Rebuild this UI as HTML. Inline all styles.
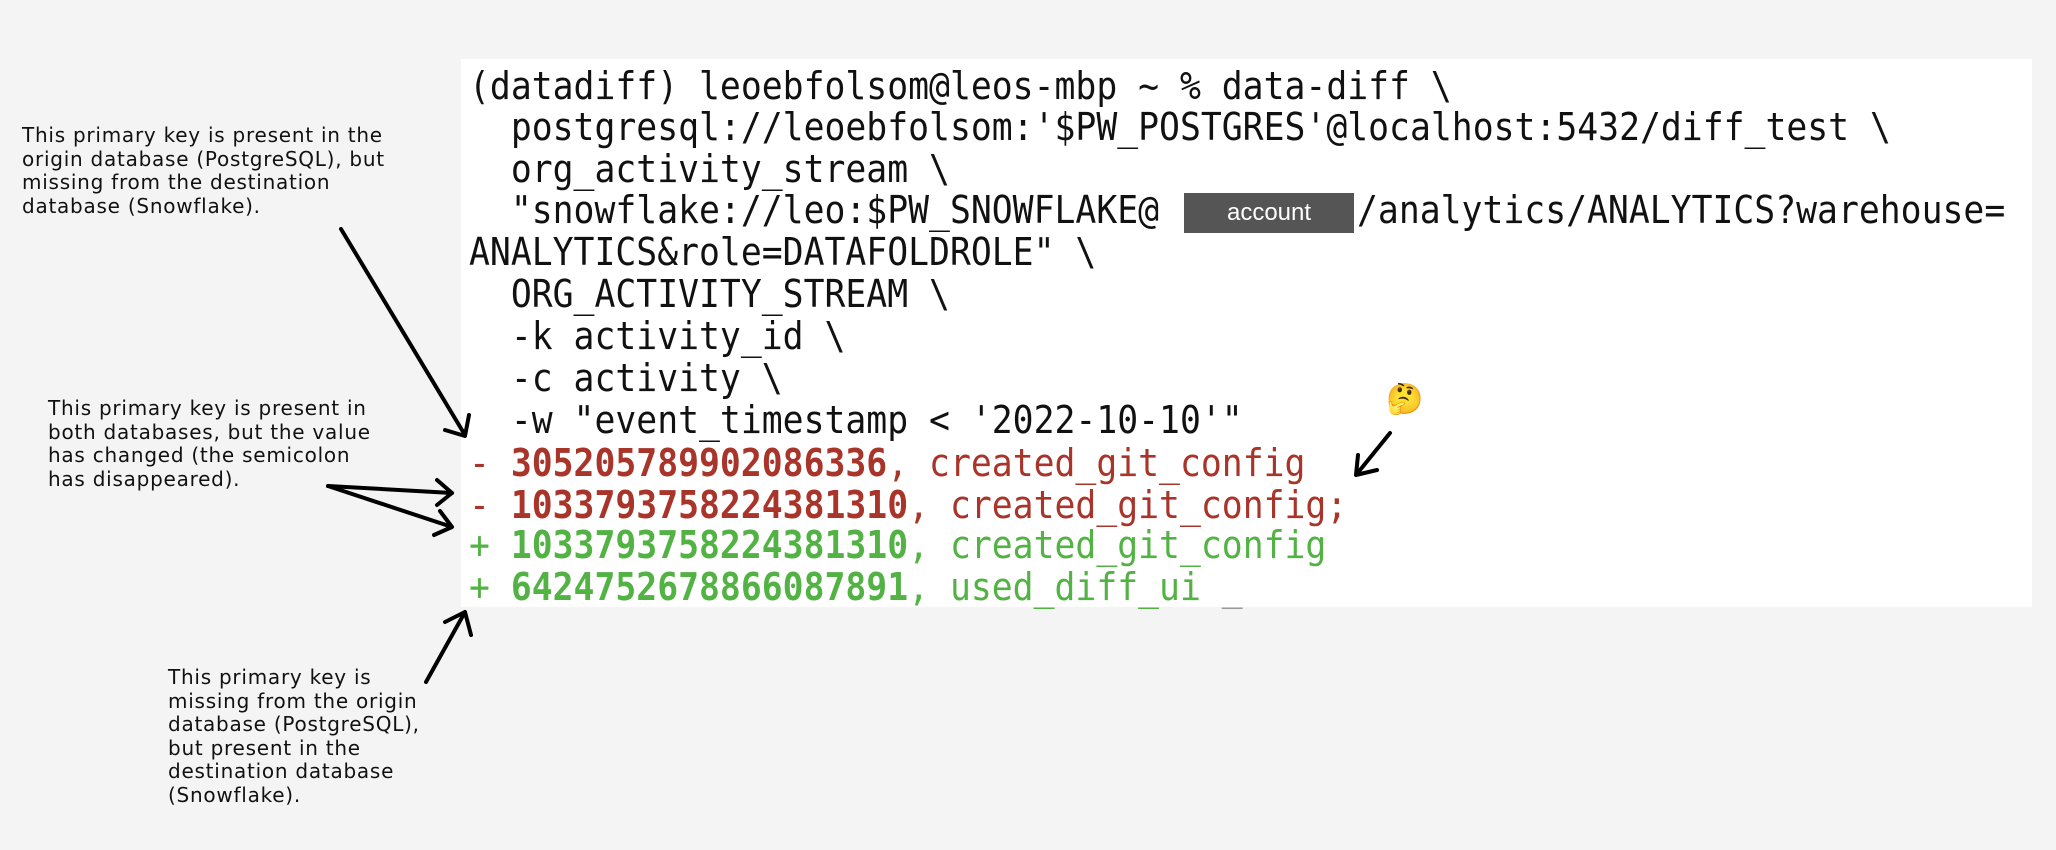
<!DOCTYPE html>
<html><head><meta charset="utf-8"><style>
html,body{margin:0;padding:0;}
body{width:2056px;height:850px;background:#f4f4f4;position:relative;overflow:hidden;}
.term{position:absolute;left:461px;top:59px;width:1571px;height:548px;background:#fff;}
.l{position:absolute;left:469px;font-family:"DejaVu Sans Mono","Liberation Mono",monospace;font-size:38px;line-height:42px;white-space:pre;color:#111;transform:scaleX(0.914);transform-origin:0 0;}
.r{color:#a8342a}.g{color:#53b244}
b{font-weight:bold}
.acc{position:absolute;left:1184px;top:193px;width:170px;height:40px;background:#555;color:#fff;font-family:"Liberation Sans",sans-serif;font-size:24px;line-height:40px;text-align:center;}
.a{position:absolute;font-family:"DejaVu Sans",sans-serif;font-size:20px;line-height:23.6px;color:#111;letter-spacing:0.75px;}
</style></head><body>
<div class="term"></div>
<div class="l" style="top:65px">(datadiff) leoebfolsom@leos-mbp ~ % data-diff \</div>
<div class="l" style="top:106px">  postgresql://leoebfolsom:'$PW_POSTGRES'@localhost:5432/diff_test \</div>
<div class="l" style="top:148px">  org_activity_stream \</div>
<div class="l" style="top:189px">  "snowflake://leo:$PW_SNOWFLAKE@</div>
<div class="l" style="top:189px;left:1357px">/analytics/ANALYTICS?warehouse=</div>
<div class="acc">account</div>
<div class="l" style="top:231px">ANALYTICS&amp;role=DATAFOLDROLE" \</div>
<div class="l" style="top:273px">  ORG_ACTIVITY_STREAM \</div>
<div class="l" style="top:315px">  -k activity_id \</div>
<div class="l" style="top:357px">  -c activity \</div>
<div class="l" style="top:399px">  -w "event_timestamp &lt; '2022-10-10'"</div>
<div class="l r" style="top:442px">- <b>305205789902086336</b>, created_git_config</div>
<div class="l r" style="top:484px">- <b>1033793758224381310</b>, created_git_config;</div>
<div class="l g" style="top:524px">+ <b>1033793758224381310</b>, created_git_config</div>
<div class="l g" style="top:566px">+ <b>6424752678866087891</b>, used_diff_ui <span style="color:#999">_</span></div>
<div style="position:absolute;left:1386px;top:383px;font-size:30px;line-height:34px;font-family:'Noto Color Emoji',sans-serif">🤔</div>
<div class="a" style="left:22px;top:124px">This primary key is present in the<br>origin database (PostgreSQL), but<br>missing from the destination<br>database (Snowflake).</div>
<div class="a" style="left:48px;top:397px">This primary key is present in<br>both databases, but the value<br>has changed (the semicolon<br>has disappeared).</div>
<div class="a" style="left:168px;top:666px">This primary key is<br>missing from the origin<br>database (PostgreSQL),<br>but present in the<br>destination database<br>(Snowflake).</div>
<svg width="2056" height="850" style="position:absolute;left:0;top:0" fill="none" stroke="#000" stroke-width="4" stroke-linecap="round" stroke-linejoin="round">
<path d="M341 229 L465 435 M445 430 L465 436 L469 415"/>
<path d="M328 486 L452 493 M437 480 L452 493 L437 505"/>
<path d="M328 486 L452 527 M440 511 L452 527 L434 535"/>
<path d="M426 682 L465 612 M445 622 L465 612 L471 635"/>
<path d="M1390 433 L1356 475 M1358 455 L1356 475 L1377 470"/>
</svg>
</body></html>
